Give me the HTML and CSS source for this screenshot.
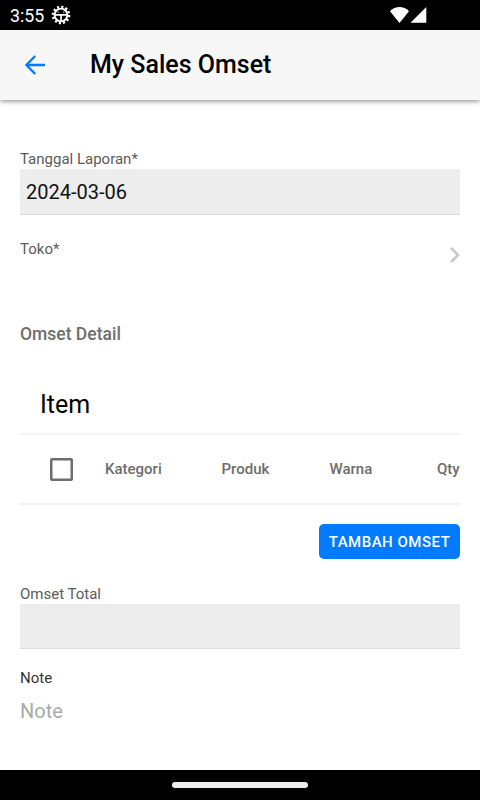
FILE: index.html
```html
<!DOCTYPE html>
<html lang="id">
<head>
  <meta charset="UTF-8" />
  <title>My Sales Omset</title>
  <meta name="viewport" content="width=device-width, initial-scale=1.0" />
  <link rel="stylesheet" href="styles.css">
</head>
<body>

  <div class="statusbar">
    <span class="time">3:55</span>
    <svg class="gear" width="20" height="20" viewBox="0 0 20 20">
      <circle cx="10" cy="10" r="8" fill="none" stroke="#fff" stroke-width="2.6" stroke-dasharray="2.1 2.09" />
      <circle cx="10" cy="10" r="6.4" fill="none" stroke="#fff" stroke-width="1.9" />
      <path d="M4 9.8h12M10 10v6" fill="none" stroke="#fff" stroke-width="1.7" />
      <path d="M7.2 6.6v1.2M12.8 6.6v1.2" stroke="#fff" stroke-width="1" />
    </svg>
    <svg class="signal" width="38" height="16" viewBox="0 0 38 16">
      <path d="M0 4.2C5.5-1.3 13.5-1.3 19 4.2L9.5 16z" fill="#fff" />
      <path d="M36.3 0v15.8H20.5z" fill="#fff" />
    </svg>
  </div>

  <header class="navbar">
    <a href="#" class="back">
      <svg width="20" height="20" viewBox="0 0 20 20">
        <path d="M20 10H1.8M10.2 1L1.4 10l8.8 9" fill="none" stroke="#007aff" stroke-width="2.3" />
      </svg>
    </a>
    <h1>My Sales Omset</h1>
  </header>

  <main class="page">
    <div class="field">
      <label for="tanggal">Tanggal Laporan*</label>
      <input id="tanggal" class="box" type="text" value="2024-03-06" readonly>
    </div>

    <a href="#" class="toko">
      <span>Toko*</span>
      <svg width="10" height="16" viewBox="0 0 10 16">
        <path d="M1 1l7 7-7 7" fill="none" stroke="#c7c7c7" stroke-width="2.5" />
      </svg>
    </a>

    <h2>Omset Detail</h2>

    <section class="card">
      <div class="card-title">Item</div>
      <div class="table-head">
        <span class="checkbox"></span>
        <span class="kategori">Kategori</span>
        <span class="produk">Produk</span>
        <span class="warna">Warna</span>
        <span class="qty">Qty</span>
      </div>
    </section>

    <button class="tambah" type="button">TAMBAH OMSET</button>

    <div class="field total">
      <label for="total">Omset Total</label>
      <input id="total" class="box" type="text" readonly>
    </div>

    <div class="field note">
      <label for="note">Note</label>
      <input id="note" type="text" placeholder="Note">
    </div>
  </main>

  <footer class="homebar"><span></span></footer>

</body>
</html>
```
FILE: styles.css
```css
* {
  box-sizing: border-box;
}

body {
  margin: 0;
  height: 800px;
  display: flex;
  flex-direction: column;
  overflow: hidden;
  background: #fff;
  color: #000;
  font-family: Roboto, sans-serif;
}

a {
  color: inherit;
  text-decoration: none;
}

svg {
  display: block;
}

.statusbar {
  height: 30px;
  flex: none;
  display: flex;
  align-items: center;
  padding: 0 52px 0 10px;
  background: #000;
  color: #fff;
}

.time {
  width: 41px;
  font-size: 17.8px;
  line-height: 20px;
  padding-top: 2px;
}

.signal {
  margin-left: auto;
}

.navbar {
  height: 70px;
  flex: none;
  display: flex;
  align-items: center;
  background: #f7f7f7;
  box-shadow: 0 1px 5px rgba(0, 0, 0, 0.5);
}

.back {
  width: 90px;
  padding-left: 25px;
}

h1 {
  margin: 0;
  font-size: 25px;
  font-weight: 500;
  line-height: 30px;
}

.page {
  flex: 1;
  padding: 50px 20px 0;
}

.field {
  display: flex;
  flex-direction: column;
}

label,
.toko span {
  font-size: 15px;
  line-height: 19px;
  color: #5a5a5a;
}

input {
  border: 0;
  outline: 0;
  font: 20px Roboto, sans-serif;
  color: #111;
}

.box {
  height: 46px;
  padding: 0 6px;
  background: #ededed;
  border-bottom: 1px solid #ddd;
  border-radius: 0;
}

.toko {
  display: flex;
  justify-content: space-between;
  margin-top: 25px;
}

.toko svg {
  margin-top: 7px;
}

h2 {
  margin: 61px 0 0;
  font-size: 17.5px;
  font-weight: 500;
  line-height: 20px;
  color: #6d6d6d;
}

.card {
  margin-top: 29px;
}

.card-title {
  height: 62px;
  padding: 17px 20px 0;
  font-size: 25px;
  line-height: 30px;
  border-bottom: 2px solid #f3f3f3;
}

.table-head {
  height: 70px;
  display: grid;
  grid-template-columns: 55px 116.5px 108px 107.5px 1fr;
  align-items: center;
  padding-left: 30px;
  font-size: 15px;
  font-weight: 500;
  color: #6d6d6d;
  border-bottom: 2px solid #f3f3f3;
}

.checkbox {
  width: 23px;
  height: 23px;
  box-shadow: inset 0 0 0 2.5px #6d6d6d;
  border-radius: 2px;
}

.tambah {
  display: block;
  width: 141px;
  height: 35px;
  margin: 19px 0 0 auto;
  padding: 0;
  border: 0;
  border-radius: 5px;
  background: #007aff;
  color: #fff;
  font: 500 15px Roboto, sans-serif;
  letter-spacing: 0.5px;
}

.total {
  margin-top: 26px;
}

.total .box {
  height: 45px;
}

.note {
  margin-top: 20px;
}

.note label {
  color: #333;
}

.note input {
  height: 46px;
  padding: 0;
}

.note input::placeholder {
  color: #a9a9a9;
}

.homebar {
  height: 30px;
  flex: none;
  display: flex;
  align-items: center;
  justify-content: center;
  background: #000;
}

.homebar span {
  width: 136px;
  height: 6px;
  border-radius: 3px;
  background: #ececec;
}
```
